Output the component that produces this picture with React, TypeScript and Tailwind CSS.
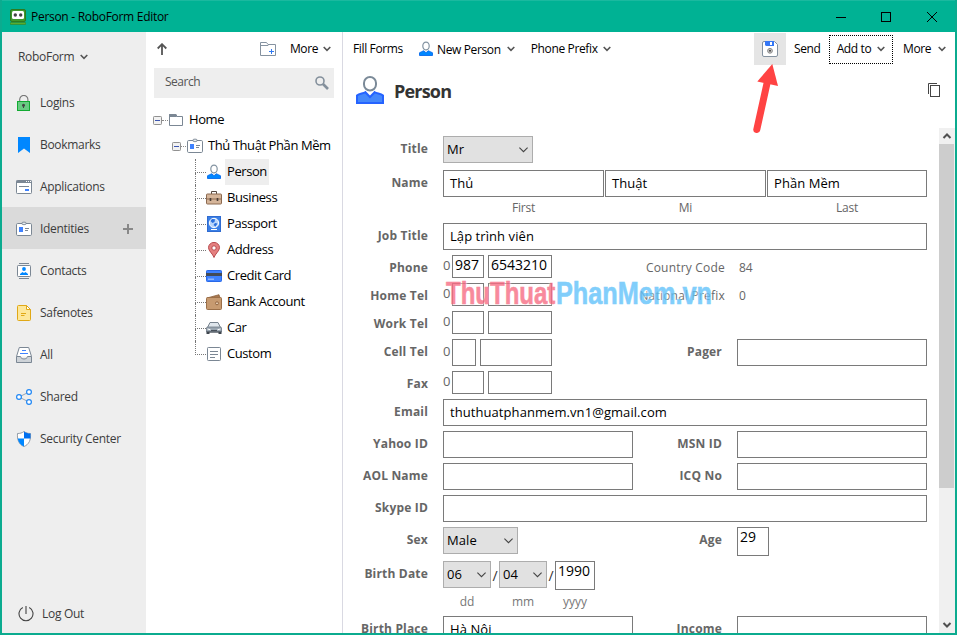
import React from 'react';

type IconProps = { className?: string };

const Chevron: React.FC<IconProps> = ({ className = 'w-2 h-[6px]' }) => (
  <svg className={className} viewBox="0 0 8 6" fill="none" stroke="#555" strokeWidth="1.6">
    <path d="M0.7 1 L4 4.3 L7.3 1" />
  </svg>
);

const SelectArrow = () => (
  <svg className="w-[9px] h-[6px] shrink-0" viewBox="0 0 9 6" fill="none" stroke="#444" strokeWidth="1.1">
    <path d="M0.4 0.6 L4.5 4.7 L8.6 0.6" />
  </svg>
);

const AppLogo = () => (
  <svg className="w-4 h-4" viewBox="0 0 16 16">
    <rect x="0.5" y="0.5" width="15" height="12" rx="1.5" fill="#3f9a2c" stroke="#2d7a20" />
    <rect x="2" y="2" width="12" height="8" rx="1.5" fill="#fff" />
    <circle cx="5.3" cy="6" r="1.7" fill="#444" />
    <circle cx="10.7" cy="6" r="1.7" fill="#444" />
    <rect x="0" y="13.5" width="16" height="2" rx="1" fill="#5cab2e" stroke="#2d7a20" strokeWidth="0.5" />
  </svg>
);

const LockIcon = () => (
  <svg className="w-4 h-4" viewBox="0 0 16 16" fill="none">
    <path d="M3.7 6.5 V4.5 a4 4 0 0 1 8.2 0 V6.5" stroke="#777" strokeWidth="1.1" />
    <rect x="1.5" y="6.5" width="12" height="9" fill="#68cb82" stroke="#12aa32" />
    <circle cx="7.5" cy="10.3" r="1.5" fill="#444" />
    <path d="M7.5 10.5 V13" stroke="#444" />
  </svg>
);

const BookmarkIcon = () => (
  <svg className="w-4 h-4" viewBox="0 0 16 16">
    <path d="M2 0 H14 V16 L8 11.5 L2 16 Z" fill="#0087ff" />
  </svg>
);

const WindowIcon = () => (
  <svg className="w-4 h-4" viewBox="0 0 16 16" fill="none">
    <rect x="0.5" y="1.5" width="15" height="13" rx="0.8" fill="#fff" stroke="#7b8794" />
    <path d="M0.5 2.8 H15.5" stroke="#7b8794" strokeWidth="2.4" />
    <path d="M10 2.5 h1 M12 2.5 h1 M14 2.5 h1" stroke="#fff" />
    <path d="M3 7.5 H13" stroke="#7b8794" />
    <rect x="9" y="10" width="4" height="2" fill="#3f82ff" />
  </svg>
);

const IdCardIcon = () => (
  <svg className="w-4 h-4 shrink-0" viewBox="0 0 16 16" fill="none">
    <rect x="0.5" y="2.5" width="15" height="12" rx="1.2" fill="#fff" stroke="#7b8794" />
    <rect x="6" y="1.2" width="4" height="2.4" rx="1" fill="#e8edf0" stroke="#7b8794" strokeWidth="0.9" />
    <rect x="3" y="6" width="4" height="5" fill="#3f82ff" />
    <path d="M9 7.5 H13 M9 9.5 H12" stroke="#7b8794" />
  </svg>
);

const ContactsIcon = () => (
  <svg className="w-4 h-4" viewBox="0 0 16 16" fill="none">
    <path d="M3 0.5 H13 M3 15.5 H13" stroke="#7b8794" />
    <rect x="1.5" y="2.5" width="13" height="11" rx="0.8" fill="#fff" stroke="#7b8794" />
    <circle cx="8" cy="6" r="1.9" fill="#0087ff" />
    <path d="M4 12 V11 L6.5 9 L8 10 L9.5 9 L12 11 V12 Z" fill="#0087ff" />
  </svg>
);

const NoteIcon = () => (
  <svg className="w-4 h-4" viewBox="0 0 16 16" fill="none" stroke="#e0a816">
    <path d="M1.5 1.5 a1 1 0 0 1 1-1 H10.5 L14.5 4.5 V14.5 a1 1 0 0 1-1 1 H2.5 a1 1 0 0 1-1-1 Z" fill="#fde79a" />
    <path d="M10.5 0.5 V4.5 H14.5 Z" fill="#fff" />
    <path d="M5 8.5 H10 M5 10.5 H8.5" />
  </svg>
);

const TrayIcon = () => (
  <svg className="w-4 h-4" viewBox="0 0 16 16" fill="none">
    <path d="M0.5 9.5 L3.3 0.5 H12.7 L15.5 9.5" fill="#fff" stroke="#7b8794" />
    <path d="M6 3.5 H10 M4 6.5 H12" stroke="#3f82ff" />
    <path d="M0.5 9.5 H4.5 C5 12.8 11 12.8 11.5 9.5 H15.5 V15.5 H0.5 Z" fill="#ced3d8" stroke="#7b8794" />
  </svg>
);

const ShareIcon = () => (
  <svg className="w-4 h-4" viewBox="0 0 16 16" fill="none">
    <path d="M3 8 L13 3 M3 8 L13 13" stroke="#9aa5b0" />
    <g fill="#fff" stroke="#2188f5" strokeWidth="1.2">
      <circle cx="3" cy="8" r="2.4" />
      <circle cx="13" cy="3" r="2.4" />
      <circle cx="13" cy="13" r="2.4" />
    </g>
  </svg>
);

const ShieldIcon = () => (
  <svg className="w-4 h-4" viewBox="0 0 16 16">
    <path d="M8 0.5 C10 2 12 2.5 14.5 2.5 C15 9 13 13.5 8 15.5 C3 13.5 1 9 1.5 2.5 C4 2.5 6 2 8 0.5 Z" fill="#fff" stroke="#7b8794" strokeWidth="0.8" />
    <path d="M8 0.5 C10 2 12 2.5 14.5 2.5 L14.5 7.5 H8 Z" fill="#0070f0" />
    <path d="M8 7.5 V15.5 C4.5 14 2.5 11.5 1.7 7.5 Z" fill="#0087ff" />
  </svg>
);

const PersonIcon: React.FC<IconProps> = ({ className = 'w-4 h-4' }) => (
  <svg className={className} viewBox="0 0 16 16" fill="none">
    <path d="M1.5 14.5 V11.8 C3 10.7 4.5 10.7 5.5 9.8 L8 11.7 L10.5 9.8 C11.5 10.7 13 10.7 14.5 11.8 V14.5 Z" fill="#0087ff" stroke="#1473ee" />
    <ellipse cx="8" cy="5" rx="3.2" ry="3.9" fill="#fff" stroke="#8494a2" strokeWidth="1.2" />
  </svg>
);

const BigPersonIcon = () => (
  <svg className="w-7 h-7" viewBox="0 0 28 28" fill="none">
    <path d="M1 27 V19.5 C3.5 17 7 18 9.3 16.2 L14 21 L18.7 16.2 C21 18 24.5 17 27 19.5 V27 Z" fill="#4488fb" stroke="#2563ff" strokeWidth="2" />
    <rect x="8" y="1" width="12" height="13.5" rx="6" fill="#fff" stroke="#7b8a98" strokeWidth="2" />
  </svg>
);

const BriefcaseIcon = () => (
  <svg className="w-4 h-4" viewBox="0 0 16 16" fill="none">
    <path d="M5.5 4 V1.5 H10.5 V4" stroke="#554840" />
    <rect x="0.5" y="4" width="15" height="10" rx="0.8" fill="#d5b59a" stroke="#8c6a50" />
    <path d="M0.5 9 H15.5" stroke="#8c6a50" />
    <path d="M4.5 8 V11 M11.5 8 V11" stroke="#4a3d36" strokeWidth="1.6" />
  </svg>
);

const PassportIcon = () => (
  <svg className="w-4 h-4" viewBox="0 0 16 16">
    <rect x="1.5" y="0.5" width="13" height="15" fill="#3a7fe6" stroke="#2f6bd0" />
    <circle cx="8" cy="7" r="4.7" fill="#b9d5fa" stroke="#fff" />
    <path d="M6 3 L9 3.2 L8.5 6 L6.5 7 L4.5 5 Z M9 7 L11.5 7.5 L9.5 10.5 L7.5 9 Z" fill="#2a6fdd" />
    <path d="M5 13.5 H11" stroke="#fff" />
  </svg>
);

const PinIcon = () => (
  <svg className="w-4 h-4" viewBox="0 0 16 16">
    <path d="M8 15.5 C7 12 2.5 9 2.5 5.7 A5.5 5.3 0 0 1 13.5 5.7 C13.5 9 9 12 8 15.5 Z" fill="#e58080" stroke="#b84b4f" />
    <circle cx="8" cy="6" r="2.2" fill="#fff" stroke="#b84b4f" />
  </svg>
);

const CreditCardIcon = () => (
  <svg className="w-4 h-4" viewBox="0 0 16 16">
    <rect x="0.5" y="2.5" width="15" height="11" rx="0.8" fill="#3f82ff" stroke="#2868e8" />
    <rect x="0" y="5" width="16" height="3" fill="#434b57" />
    <rect x="2" y="10.5" width="6" height="1.5" fill="#8db6ff" />
  </svg>
);

const WalletIcon = () => (
  <svg className="w-4 h-4" viewBox="0 0 16 16">
    <path d="M1 4 L13 0.7 L14 4 Z" fill="#a87850" stroke="#8c5f3a" strokeWidth="0.8" />
    <rect x="0.5" y="3.5" width="15" height="12" rx="1" fill="#c79a70" stroke="#9b6f48" />
    <circle cx="11" cy="9.3" r="1.5" fill="#e6cdb2" stroke="#8c5f3a" strokeWidth="0.9" />
  </svg>
);

const CarIcon = () => (
  <svg className="w-4 h-4" viewBox="0 0 16 16">
    <path d="M1.5 7.5 L4 2.5 H12 L14.5 7.5 Z" fill="#dfe6ec" stroke="#77838f" />
    <path d="M0.5 8 Q0.5 7 2 7 H14 Q15.5 7 15.5 8 V12 H0.5 Z" fill="#9aa6b1" stroke="#6d7985" strokeWidth="0.8" />
    <path d="M1.5 9 L4.5 9.7 M14.5 9 L11.5 9.7" stroke="#fff" />
    <path d="M5 10.5 H11" stroke="#48505a" />
    <path d="M0.5 11.5 H15.5 V14 H12.5 V12.5 H3.5 V14 H0.5 Z" fill="#3f464e" />
  </svg>
);

const CustomIcon = () => (
  <svg className="w-4 h-4" viewBox="0 0 16 16" fill="none" stroke="#7b8794">
    <rect x="1.5" y="1.5" width="13" height="13" rx="0.8" fill="#fff" />
    <path d="M4 5.5 H12 M4 8.5 H12 M4 11.5 H9" />
  </svg>
);

const FolderIcon = () => (
  <svg className="w-[14px] h-[12px] shrink-0" viewBox="0 0 14 12" fill="none" stroke="#7b8794">
    <path d="M0.5 0.5 H7 L8 2.5 H13.5 V11.5 H0.5 Z" fill="#fff" />
    <path d="M0.5 0.5 H7 L7.5 2.5 H0.5 Z" fill="#7b8794" />
  </svg>
);

const NewFolderIcon = () => (
  <svg className="w-4 h-[14px]" viewBox="0 0 16 14" fill="none" stroke="#8592a0">
    <path d="M0.5 0.5 H6.5 L8 2.5 H15.5 V13.5 H0.5 Z" />
    <path d="M0.5 3.5 H8 L9 2.5" />
    <path d="M11.5 7 V12 M9 9.5 H14" stroke="#2f78f0" />
  </svg>
);

const SaveIcon = () => (
  <svg className="w-4 h-4" viewBox="0 0 16 16" fill="none">
    <path d="M2 0.5 H12.5 L15.5 3.5 V14 a1.5 1.5 0 0 1-1.5 1.5 H2 A1.5 1.5 0 0 1 0.5 14 V2 A1.5 1.5 0 0 1 2 0.5 Z" fill="#fff" stroke="#8592a0" />
    <path d="M3 0 H12 V5 H4 L3 4 Z" fill="#3577f5" />
    <rect x="8" y="1" width="2" height="3" fill="#fff" />
    <circle cx="8" cy="9.8" r="2.4" fill="#ccc" stroke="#888" />
    <circle cx="8" cy="9.8" r="1" fill="#444" />
  </svg>
);

const CopyIcon = () => (
  <svg className="w-3 h-[14px]" viewBox="0 0 12 14" fill="none" stroke="#444">
    <path d="M0.5 11 V0.5 H9" />
    <rect x="2.5" y="2.5" width="9" height="11" fill="#fff" />
  </svg>
);

const navItems = [
  { label: 'Logins', icon: <LockIcon /> },
  { label: 'Bookmarks', icon: <BookmarkIcon /> },
  { label: 'Applications', icon: <WindowIcon /> },
  { label: 'Identities', icon: <IdCardIcon />, active: true },
  { label: 'Contacts', icon: <ContactsIcon /> },
  { label: 'Safenotes', icon: <NoteIcon /> },
  { label: 'All', icon: <TrayIcon /> },
  { label: 'Shared', icon: <ShareIcon /> },
  { label: 'Security Center', icon: <ShieldIcon /> },
];

const treeItems = [
  { label: 'Person', icon: <PersonIcon />, active: true },
  { label: 'Business', icon: <BriefcaseIcon /> },
  { label: 'Passport', icon: <PassportIcon /> },
  { label: 'Address', icon: <PinIcon /> },
  { label: 'Credit Card', icon: <CreditCardIcon /> },
  { label: 'Bank Account', icon: <WalletIcon /> },
  { label: 'Car', icon: <CarIcon /> },
  { label: 'Custom', icon: <CustomIcon /> },
];

const TitleBar = () => (
  <header className="h-8 shrink-0 flex items-center bg-[#00b294] text-black border-t border-[#1ab99f] px-2">
    <AppLogo />
    <span className="ml-[5px] text-[12px] tracking-[-0.29px]">Person - RoboForm Editor</span>
    <div className="ml-auto flex items-center mr-[10px]">
      <svg className="w-[10px] h-[10px]" viewBox="0 0 10 10" stroke="#000"><path d="M0 5.5 H10" /></svg>
      <svg className="w-[10px] h-[10px] ml-[35px]" viewBox="0 0 10 10" fill="none" stroke="#000"><rect x="0.5" y="0.5" width="9" height="9" /></svg>
      <svg className="w-[10px] h-[10px] ml-[36px]" viewBox="0 0 10 10" stroke="#000"><path d="M0 0 L10 10 M10 0 L0 10" /></svg>
    </div>
  </header>
);

const Sidebar = () => (
  <aside className="w-36 shrink-0 flex flex-col bg-[#eeeeee] text-[#3c3c3c] text-[12px] tracking-[-0.3px]">
    <div className="h-[49px] flex items-center pl-4 pt-px gap-[6px]">
      <span>RoboForm</span>
      <Chevron />
    </div>
    <nav>
      {navItems.map(item => (
        <div key={item.label} className={item.active ? 'h-[42px] flex items-center pl-[14px] pt-[2px] bg-[#dadada]' : 'h-[42px] flex items-center pl-[14px] pt-[2px]'}>
          {item.icon}
          <span className="ml-2">{item.label}</span>
          {item.active && (
            <svg className="w-[10px] h-[10px] ml-auto mr-[13px]" viewBox="0 0 10 10" stroke="#888" strokeWidth="2">
              <path d="M5 0 V10 M0 5 H10" />
            </svg>
          )}
        </div>
      ))}
    </nav>
    <div className="mt-auto h-[38px] flex items-center pl-4">
      <svg className="w-4 h-4" viewBox="0 0 16 16" fill="none" stroke="#444" strokeWidth="1.1">
        <path d="M8 0 V8 M4.8 1.5 a7 7 0 1 0 6.4 0" />
      </svg>
      <span className="ml-2">Log Out</span>
    </div>
  </aside>
);

const Collapse = () => (
  <svg className="w-[9px] h-[9px] shrink-0" viewBox="0 0 9 9">
    <rect x="0.5" y="0.5" width="8" height="8" rx="0.8" fill="#f2f2f2" stroke="#919191" />
    <path d="M2 4.5 H7" stroke="#3c55b0" />
  </svg>
);

const TreePanel = () => (
  <section className="w-[197px] shrink-0 flex flex-col border-r border-[#d9d9e2] text-black">
    <div className="h-[34px] flex items-center pl-[11px] pr-[11px]">
      <svg className="w-[10px] h-3" viewBox="0 0 10 12" fill="none" stroke="#555" strokeWidth="1.8">
        <path d="M5 12 V1.5 M0.7 5.5 L5 1.2 L9.3 5.5" />
      </svg>
      <div className="ml-auto flex items-center text-[12px]">
        <NewFolderIcon />
        <span className="ml-[14px] tracking-[-0.4px]">More</span>
        <Chevron className="w-2 h-[6px] ml-[5px]" />
      </div>
    </div>
    <div className="mt-[2px] mx-2 h-[30px] shrink-0 flex items-center justify-between bg-[#eeeeee] pl-[11px] pr-[5px] text-[12px] text-[#555]">
      <span className="tracking-[-0.5px] pb-[2px]">Search</span>
      <svg className="w-[14px] h-[14px]" viewBox="0 0 14 14" fill="none" stroke="#84909c">
        <circle cx="5" cy="5" r="4" strokeWidth="1.6" />
        <path d="M8 8 L13 13" strokeWidth="2.6" />
      </svg>
    </div>
    <div className="mt-[9px] text-[13px] tracking-[-0.42px] whitespace-nowrap">
      <div className="h-[26px] flex items-center pl-[7px]">
        <Collapse />
        <span className="w-[6px] mr-[1px] border-t border-dotted border-[#888]" />
        <FolderIcon />
        <span className="ml-[6px]">Home</span>
      </div>
      <div className="h-[26px] flex items-center pl-[26px]">
        <Collapse />
        <span className="w-[5px] mr-[1px] border-t border-dotted border-[#888]" />
        <IdCardIcon />
        <span className="ml-[5px]">Thủ Thuật Phần Mềm</span>
      </div>
      {treeItems.map((item, i) => (
        <div key={item.label} className="h-[26px] flex items-center pl-[49px]">
          <div className="w-[11px] h-full flex flex-col">
            <span className="h-[14px] border-l border-b border-dotted border-[#777]" />
            {i < treeItems.length - 1 && <span className="h-3 border-l border-dotted border-[#777]" />}
          </div>
          {item.icon}
          <span className={item.active ? 'ml-[3px] h-full flex items-center px-[2px] bg-[#eeeeee]' : 'ml-[3px] px-[2px]'}>
            {item.label}
          </span>
        </div>
      ))}
    </div>
  </section>
);

const Toolbar = () => (
  <div className="h-[34px] shrink-0 flex items-center text-[12px] text-black tracking-[-0.36px] pl-[10px] pr-[9px]">
    <span>Fill Forms</span>
    <span className="ml-[15px]"><PersonIcon /></span>
    <span className="ml-[3px] pt-px">New Person</span>
    <Chevron className="w-2 h-[6px] ml-[6px]" />
    <span className="ml-[16px]">Phone Prefix</span>
    <Chevron className="w-2 h-[6px] ml-[5px]" />
    <div className="ml-auto flex items-center">
      <span className="size-8 flex items-center justify-center bg-[#e5e5e5]"><SaveIcon /></span>
      <span className="ml-2 w-[27px]">Send</span>
      <span className="ml-[8px] w-16 h-[29px] flex items-center justify-center gap-[6px] border border-dotted border-black">
        Add to <Chevron />
      </span>
      <span className="ml-[10px] w-[29px]">More</span>
      <Chevron className="w-2 h-[6px] ml-[6px]" />
    </div>
  </div>
);

const Label: React.FC<{ children: React.ReactNode }> = ({ children }) => (
  <label className="w-[85px] h-[25px] shrink-0 mr-[15px] flex items-center justify-end text-[12px] tracking-[0.18px] font-bold text-[#666]">
    {children}
  </label>
);

const RightLabel: React.FC<{ children: React.ReactNode }> = ({ children }) => (
  <label className="w-[80px] h-[25px] shrink-0 ml-auto mr-[15px] flex items-center justify-end text-[12px] tracking-[0.18px] font-bold text-[#666]">
    {children}
  </label>
);

const Field: React.FC<{ value?: string; className: string }> = ({ value, className }) => (
  <div className={`h-[27px] shrink-0 border border-[#7a7a7a] bg-white px-[6px] flex items-center text-[13px] tracking-[0.07px] text-black ${className}`}>
    {value}
  </div>
);

const SmallField: React.FC<{ value?: string; className: string }> = ({ value, className }) => (
  <div className={`shrink-0 border border-[#7a7a7a] bg-white pl-[2px] leading-[18px] text-[14px] text-black ${className}`}>
    {value}
  </div>
);

const Select: React.FC<{ value: string; className: string }> = ({ value, className }) => (
  <div className={`h-[27px] shrink-0 border border-[#adadad] bg-[#e1e1e1] pl-[3px] pr-1 flex items-center justify-between text-[13px] tracking-[0.1px] text-black ${className}`}>
    {value}
    <SelectArrow />
  </div>
);

const PhoneRow: React.FC<{ label: string; area?: string; number?: string; children?: React.ReactNode }> = ({ label, area, number, children }) => (
  <div className="h-[23px] flex">
    <Label>{label}</Label>
    <span className="w-[9px] text-[13px] leading-[21px] text-[#666]">0</span>
    <SmallField value={area} className="w-8 h-[23px] mr-1" />
    <SmallField value={number} className="w-16 h-[23px]" />
    {children}
  </div>
);

const PhoneNote: React.FC<{ label: string; value: string }> = ({ label, value }) => (
  <div className="ml-auto w-[282px] h-[25px] flex items-center text-[12px] text-[#666]">
    <span className="w-20 flex justify-end whitespace-nowrap tracking-[0.2px]">{label}</span>
    <span className="ml-[14px]">{value}</span>
  </div>
);

const PersonForm = () => (
  <form className="w-[584px] flex flex-col gap-[5px] pt-[8px] [&>*]:shrink-0">
    <div className="flex mb-[2px]">
      <Label>Title</Label>
      <Select value="Mr" className="w-[90px]" />
    </div>
    <div className="flex">
      <Label>Name</Label>
      <div className="flex gap-[1px]">
        <Field value="Thủ" className="w-[161px]" />
        <Field value="Thuật" className="w-[161px]" />
        <Field value="Phần Mềm" className="w-[160px]" />
      </div>
    </div>
    <div className="h-4 flex pl-[100px] gap-[1px] text-[12px] leading-[12px] tracking-[-0.2px] text-[#666] text-center">
      <span className="w-[161px]">First</span>
      <span className="w-[161px]">Mi</span>
      <span className="w-[160px]">Last</span>
    </div>
    <div className="flex">
      <Label>Job Title</Label>
      <Field value="Lập trình viên" className="w-[484px]" />
    </div>
    <PhoneRow label="Phone" area="987" number="6543210">
      <PhoneNote label="Country Code" value="84" />
    </PhoneRow>
    <PhoneRow label="Home Tel">
      <PhoneNote label="National Prefix" value="0" />
    </PhoneRow>
    <PhoneRow label="Work Tel" />
    <div className="flex">
      <Label>Cell Tel</Label>
      <span className="w-[9px] text-[13px] leading-[24px] text-[#666]">0</span>
      <SmallField className="w-6 h-[27px] mr-1" />
      <SmallField className="w-[72px] h-[27px]" />
      <RightLabel>Pager</RightLabel>
      <Field className="w-[190px]" />
    </div>
    <PhoneRow label="Fax" />
    <div className="flex">
      <Label>Email</Label>
      <Field value="thuthuatphanmem.vn1@gmail.com" className="w-[484px]" />
    </div>
    <div className="flex">
      <Label>Yahoo ID</Label>
      <Field className="w-[190px]" />
      <RightLabel>MSN ID</RightLabel>
      <Field className="w-[190px]" />
    </div>
    <div className="flex">
      <Label>AOL Name</Label>
      <Field className="w-[190px]" />
      <RightLabel>ICQ No</RightLabel>
      <Field className="w-[190px]" />
    </div>
    <div className="flex">
      <Label>Skype ID</Label>
      <Field className="w-[484px]" />
    </div>
    <div className="flex">
      <Label>Sex</Label>
      <Select value="Male" className="w-[75px]" />
      <RightLabel>Age</RightLabel>
      <SmallField value="29" className="w-8 h-[29px] mr-[158px]" />
    </div>
    <div className="h-[29px] flex text-[14px] text-[#333]">
      <Label>Birth Date</Label>
      <Select value="06" className="w-12" />
      <span className="w-2 text-center leading-[29px]">/</span>
      <Select value="04" className="w-12" />
      <span className="w-2 text-center leading-[29px]">/</span>
      <SmallField value="1990" className="w-10 h-[29px]" />
    </div>
    <div className="h-4 flex pl-[100px] gap-2 text-[12px] leading-[13px] text-[#777] text-center">
      <span className="w-12">dd</span>
      <span className="w-12">mm</span>
      <span className="w-10">yyyy</span>
    </div>
    <div className="flex">
      <Label>Birth Place</Label>
      <Field value="Hà Nội" className="w-[190px]" />
      <RightLabel>Income</RightLabel>
      <Field className="w-[190px]" />
    </div>
  </form>
);

const ScrollBar = () => (
  <div className="w-4 shrink-0 flex flex-col bg-[#f0f0f0]">
    <svg className="w-4 h-4 shrink-0" viewBox="0 0 16 16" fill="none" stroke="#505050" strokeWidth="2">
      <path d="M4.5 10 L8 6.5 L11.5 10" />
    </svg>
    <div className="w-[15px] h-[344px] bg-[#cdcdcd]" />
    <svg className="w-4 h-4 shrink-0 mt-auto" viewBox="0 0 16 16" fill="none" stroke="#505050" strokeWidth="2">
      <path d="M4.5 6 L8 9.5 L11.5 6" />
    </svg>
  </div>
);

const App: React.FC = () => {
  return (
    <div className="relative w-[957px] h-[635px] overflow-hidden flex flex-col bg-white border-x-2 border-b-2 border-[#0bab8f] font-['Open_Sans','Noto_Sans',sans-serif]">
      <TitleBar />
      <div className="flex-1 min-h-0 flex">
        <Sidebar />
        <TreePanel />
        <main className="flex-1 min-w-0 flex flex-col">
          <Toolbar />
          <div className="h-[62px] shrink-0 flex items-start pl-[13px] pr-[15px] pt-[10px]">
            <BigPersonIcon />
            <h1 className="ml-[10px] pt-px text-[18px] leading-[28px] font-bold text-[#333] tracking-[-0.8px]">Person</h1>
            <span className="ml-auto mt-[7px]"><CopyIcon /></span>
          </div>
          <div className="flex-1 min-h-0 flex justify-between overflow-hidden">
            <PersonForm />
            <ScrollBar />
          </div>
        </main>
      </div>

      {/* Watermark */}
      <div className="absolute left-[444px] top-[275px] h-9 flex font-['Liberation_Sans',sans-serif] font-bold text-[32px] leading-9 opacity-80 [text-shadow:0_0_2px_#fff,0_0_3px_#fff]">
        <span className="w-[110px] text-[#f76d84] [-webkit-text-stroke:0.6px_#f76d84]"><span className="block origin-left scale-x-[0.75]">ThuThuat</span></span>
        <span className="w-[156px] text-[#62c3fb] [-webkit-text-stroke:0.6px_#62c3fb]"><span className="block origin-left scale-x-[0.79]">PhanMem.vn</span></span>
      </div>

      {/* Arrow pointing to the save button */}
      <svg className="absolute left-[746px] top-[62px] w-8 h-[72px]" viewBox="0 0 32 72" fill="none">
        <path d="M8.8 67.500 L19.300 20" stroke="#ff4343" strokeWidth="7" strokeLinecap="round" />
        <path d="M24.300 2 L9.300 19.500 L30 24 Z" fill="#ff4343" />
      </svg>
    </div>
  );
};

export default App;
